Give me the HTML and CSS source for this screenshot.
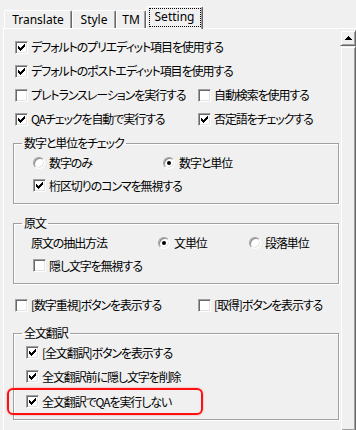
FILE: index.html
```html
<!DOCTYPE html>
<html lang="ja">
<head>
<meta charset="UTF-8" />
<title>Setting</title>
<link rel="stylesheet" href="styles.css">
</head>
<body>

<div class="window">
  <div class="tabs">
    <div class="tab tab-translate">Translate</div>
    <div class="tab tab-style">Style</div>
    <div class="tab tab-tm">TM</div>
    <div class="tab active"><span class="focus">Setting</span></div>
  </div>

  <div class="panel">
    <div class="content">
      <div class="row">
        <label class="opt"><span class="cb"><svg viewBox="0 0 11 11"><path d="M8 2h1v1h-1z M7 3h2v1h-2z M2 4h1v1h-1z M6 4h3v1h-3z M2 5h2v1h-2z M5 5h3v1h-3z M2 6h5v1h-5z M3 7h3v1h-3z M4 8h1v1h-1z"/></svg></span>デフォルトのプリエディット項目を使用する</label>
      </div>
      <div class="row">
        <label class="opt"><span class="cb"><svg viewBox="0 0 11 11"><path d="M8 2h1v1h-1z M7 3h2v1h-2z M2 4h1v1h-1z M6 4h3v1h-3z M2 5h2v1h-2z M5 5h3v1h-3z M2 6h5v1h-5z M3 7h3v1h-3z M4 8h1v1h-1z"/></svg></span>デフォルトのポストエディット項目を使用する</label>
      </div>
      <div class="row">
        <label class="opt col"><span class="cb"></span>プレトランスレーションを実行する</label>
        <label class="opt"><span class="cb"></span>自動検索を使用する</label>
      </div>
      <div class="row">
        <label class="opt col"><span class="cb"><svg viewBox="0 0 11 11"><path d="M8 2h1v1h-1z M7 3h2v1h-2z M2 4h1v1h-1z M6 4h3v1h-3z M2 5h2v1h-2z M5 5h3v1h-3z M2 6h5v1h-5z M3 7h3v1h-3z M4 8h1v1h-1z"/></svg></span>QAチェックを自動で実行する</label>
        <label class="opt"><span class="cb"><svg viewBox="0 0 11 11"><path d="M8 2h1v1h-1z M7 3h2v1h-2z M2 4h1v1h-1z M6 4h3v1h-3z M2 5h2v1h-2z M5 5h3v1h-3z M2 6h5v1h-5z M3 7h3v1h-3z M4 8h1v1h-1z"/></svg></span>否定語をチェックする</label>
      </div>

      <fieldset class="group group-number">
        <legend>数字と単位をチェック</legend>
        <div class="grow">
          <label class="opt col-radio"><span class="rb"></span>数字のみ</label>
          <label class="opt"><span class="rb on"></span>数字と単位</label>
        </div>
        <div class="grow">
          <label class="opt"><span class="cb"><svg viewBox="0 0 11 11"><path d="M8 2h1v1h-1z M7 3h2v1h-2z M2 4h1v1h-1z M6 4h3v1h-3z M2 5h2v1h-2z M5 5h3v1h-3z M2 6h5v1h-5z M3 7h3v1h-3z M4 8h1v1h-1z"/></svg></span>桁区切りのコンマを無視する</label>
        </div>
      </fieldset>

      <fieldset class="group group-source">
        <legend>原文</legend>
        <div class="grow grow-label">
          <span class="field-name">原文の抽出方法</span>
          <label class="opt col-unit"><span class="rb on"></span>文単位</label>
          <label class="opt"><span class="rb"></span>段落単位</label>
        </div>
        <div class="grow">
          <label class="opt"><span class="cb"></span>隠し文字を無視する</label>
        </div>
      </fieldset>

      <div class="row row-buttons">
        <label class="opt col"><span class="cb"></span>[数字重視]ボタンを表示する</label>
        <label class="opt"><span class="cb"></span>[取得]ボタンを表示する</label>
      </div>

      <fieldset class="group group-full">
        <legend>全文翻訳</legend>
        <div class="frow first">
          <label class="opt"><span class="cb"><svg viewBox="0 0 11 11"><path d="M8 2h1v1h-1z M7 3h2v1h-2z M2 4h1v1h-1z M6 4h3v1h-3z M2 5h2v1h-2z M5 5h3v1h-3z M2 6h5v1h-5z M3 7h3v1h-3z M4 8h1v1h-1z"/></svg></span>[全文翻訳]ボタンを表示する</label>
        </div>
        <div class="frow">
          <label class="opt"><span class="cb"><svg viewBox="0 0 11 11"><path d="M8 2h1v1h-1z M7 3h2v1h-2z M2 4h1v1h-1z M6 4h3v1h-3z M2 5h2v1h-2z M5 5h3v1h-3z M2 6h5v1h-5z M3 7h3v1h-3z M4 8h1v1h-1z"/></svg></span>全文翻訳前に隠し文字を削除</label>
        </div>
        <div class="frow marked">
          <label class="opt"><span class="cb"><svg viewBox="0 0 11 11"><path d="M8 2h1v1h-1z M7 3h2v1h-2z M2 4h1v1h-1z M6 4h3v1h-3z M2 5h2v1h-2z M5 5h3v1h-3z M2 6h5v1h-5z M3 7h3v1h-3z M4 8h1v1h-1z"/></svg></span>全文翻訳でQAを実行しない</label>
          <span class="mark"></span>
        </div>
      </fieldset>
    </div>

    <div class="scrollbar">
      <div class="sb-btn"><svg width="7" height="4" viewBox="0 0 7 4"><path d="M3 0h1v1h1v1h1v1h1v1h-7v-1h1v-1h1v-1h1z"/></svg></div>
      <div class="sb-thumb"></div>
    </div>
  </div>
</div>

</body>
</html>
```

FILE: styles.css
```css
body {
  margin: 0;
  background-color: #f0f0f0;
  font-family: "Noto Sans CJK JP", sans-serif;
  font-size: 12px;
  letter-spacing: -1.1px;
  font-feature-settings: "palt";
  color: #000;
}

.window {
  width: 356px;
  height: 430px;
  overflow: hidden;
}

/* tabs */

.tabs {
  display: flex;
  align-items: flex-end;
  height: 28px;
  padding-left: 4px;
  position: relative;
  z-index: 1;
}

.tab {
  box-sizing: border-box;
  height: 18px;
  display: flex;
  align-items: center;
  justify-content: center;
  border-left: 1px solid #fff;
  border-top: 1px solid #fff;
  border-right: 1px solid #696969;
  box-shadow: inset -1px 0 0 #a0a0a0;
  border-radius: 2px 2px 0 0;
  font-family: "Noto Sans", sans-serif;
  font-size: 12px;
  letter-spacing: 0;
  font-feature-settings: normal;
  line-height: 16px;
}

.tab-translate { width: 68px; }
.tab-style { width: 44px; }
.tab-tm { width: 30px; }

.tab.active {
  width: 57px;
  height: 23px;
  margin-bottom: -1px;
  align-items: flex-start;
  padding-top: 1px;
  background-color: #f0f0f0;
}

.focus {
  box-sizing: border-box;
  width: 52px;
  height: 19px;
  border: 1px dotted #000;
  text-align: center;
  line-height: 16px;
}

/* panel */

.panel {
  display: flex;
  height: 402px;
  margin-left: 3px;
  border-left: 1px solid #fff;
  border-top: 1px solid #fff;
}

.content {
  flex: 1;
  padding-top: 6px;
  overflow: hidden;
}

.row {
  display: flex;
  align-items: center;
  height: 24px;
  padding-left: 11px;
}

.col {
  width: 183px;
}

.opt {
  display: flex;
  align-items: center;
  line-height: 16px;
  white-space: nowrap;
}

.cb {
  box-sizing: border-box;
  width: 13px;
  height: 13px;
  margin-right: 3px;
  flex: none;
  background-color: #fff;
  border: 1px solid;
  border-color: #a0a0a0 #fff #fff #a0a0a0;
  box-shadow: inset 1px 1px 0 #696969, inset -1px -1px 0 #e3e3e3;
}

.cb svg {
  display: block;
  width: 11px;
  height: 11px;
  shape-rendering: crispEdges;
}

.rb {
  box-sizing: border-box;
  width: 12px;
  height: 12px;
  margin-right: 4px;
  flex: none;
  border-radius: 50%;
  background-color: #fff;
  border: 1px solid;
  border-color: #a0a0a0 #fff #fff #a0a0a0;
  box-shadow: inset 1px 1px 0 #8a8a8a, inset -1px -1px 0 #e3e3e3;
  display: flex;
  align-items: center;
  justify-content: center;
}

.rb.on::after {
  content: "";
  width: 4px;
  height: 4px;
  border-radius: 50%;
  background-color: #000;
}

/* group boxes */

.group {
  margin: 0 1px 0 9px;
  padding: 0;
  min-width: 0;
  border: 1px solid #a0a0a0;
  box-shadow: 1px 1px 0 #fff, inset 1px 1px 0 #fff;
}

.group legend {
  margin-left: 8px;
  padding: 0 2px;
  line-height: 16px;
}

.group-number {
  margin-top: 4px;
  padding-bottom: 6px;
}

.group-source {
  margin-top: 11px;
  padding-bottom: 6px;
}

.grow {
  display: flex;
  align-items: center;
  height: 23px;
  padding-left: 19px;
}

.grow-label {
  padding-left: 17px;
}

.col-radio {
  width: 130px;
}

.field-name {
  width: 127px;
  line-height: 16px;
}

.col-unit {
  width: 91px;
}

.row-buttons {
  margin-top: 9px;
}

.group-full {
  margin-top: 8px;
  padding-bottom: 5px;
}

.frow {
  display: flex;
  align-items: center;
  height: 25px;
  padding-left: 12px;
}

.frow.first {
  height: 23px;
}

.frow.marked {
  position: relative;
}

.mark {
  position: absolute;
  left: -7px;
  top: -1px;
  width: 196px;
  height: 27px;
  box-sizing: border-box;
  border: 2px solid #ff1010;
  border-radius: 6px;
  box-shadow: 0 0 2px rgba(255, 0, 0, 0.45);
}

/* scrollbar */

.scrollbar {
  width: 16px;
  margin-top: 1px;
  display: flex;
  flex-direction: column;
  background-color: #f7f7f7;
}

.sb-btn,
.sb-thumb {
  box-sizing: border-box;
  background-color: #f0f0f0;
  border: 1px solid;
  border-color: #f0f0f0 #696969 #696969 #f0f0f0;
  box-shadow: inset 1px 1px 0 #fff, inset -1px -1px 0 #a0a0a0;
}

.sb-btn {
  height: 16px;
  display: flex;
  align-items: center;
  justify-content: center;
}

.sb-btn svg {
  display: block;
  shape-rendering: crispEdges;
}

.sb-thumb {
  flex: 1;
}
```
